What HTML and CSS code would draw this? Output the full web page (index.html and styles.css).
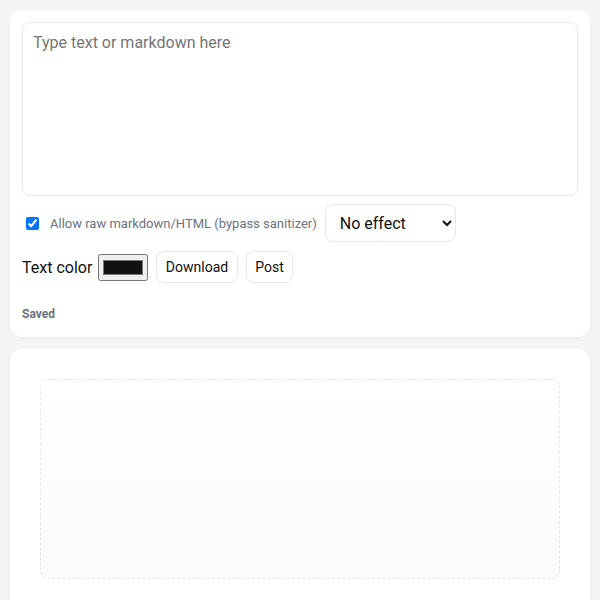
FILE: index.html
```html
<!DOCTYPE html>
<html>
<head>
<meta charset="utf-8">
<link rel="stylesheet" href="styles.css">
</head>
<body>
<div class="card editor">
  <textarea class="input" placeholder="Type text or markdown here"></textarea>
  <div class="row">
    <label class="raw"><input type="checkbox" checked> Allow raw markdown/HTML (bypass sanitizer)</label>
    <select class="effect">
      <option>No effect</option>
    </select>
  </div>
  <div class="row row2">
    <label class="color-label">Text color <input type="color" value="#111111"></label>
    <button class="btn">Download</button>
    <button class="btn">Post</button>
  </div>
  <div class="status">Saved</div>
</div>
<div class="card preview-card">
  <div class="preview"></div>
</div>
</body>
</html>
```

FILE: styles.css
```css
html, body {
  margin: 0;
  padding: 0;
}
body {
  background: #f3f4f6;
  font-family: Roboto, "Noto Sans", sans-serif;
  color: #111827;
  padding: 10px;
  display: flex;
  flex-direction: column;
  gap: 12px;
}
.card {
  background: #fff;
  border-radius: 12px;
  box-shadow: 0 1px 3px rgba(0,0,0,0.05);
}
.editor {
  padding: 12px;
  display: flex;
  flex-direction: column;
}
.input {
  box-sizing: border-box;
  width: 100%;
  height: 174px;
  border: 1px solid #e5e7eb;
  border-radius: 8px;
  padding: 10px;
  font-family: Roboto, sans-serif;
  font-size: 16px;
  resize: none;
  outline: none;
  display: block;
}
.input::placeholder {
  color: #757575;
}
.row {
  display: flex;
  align-items: center;
  gap: 8px;
  margin-top: 8px;
}
.row2 {
  margin-top: 9px;
}
.raw {
  display: flex;
  align-items: center;
  gap: 8px;
  font-size: 13px;
  color: #6b7280;
}
.raw input {
  margin: 3px 3px 3px 4px;
}
.effect {
  height: 38px;
  width: 131px;
  border: 1px solid #e5e7eb;
  border-radius: 8px;
  background: #fff;
  padding: 0 10px;
  font-family: Roboto, sans-serif;
  font-size: 16px;
  color: #111;
}
.color-label {
  display: flex;
  align-items: center;
  gap: 6px;
  font-size: 16px;
  color: #111;
}
.color-label input {
  margin: 0;
}
.btn {
  height: 32px;
  border: 1px solid #e5e7eb;
  border-radius: 8px;
  background: #fff;
  padding: 0 8.5px;
  font-family: Roboto, sans-serif;
  font-size: 14px;
  color: #111;
}
.status {
  margin-top: 24px;
  margin-bottom: 4px;
  font-size: 12px;
  font-weight: 700;
  color: #6b7280;
}
.preview-card {
  padding: 30px;
  min-height: 300px;
}
.preview {
  height: 200px;
  border: 1px dashed #e5e7eb;
  border-radius: 8px;
  background: linear-gradient(#ffffff, #fafafa);
  box-sizing: border-box;
}
```
